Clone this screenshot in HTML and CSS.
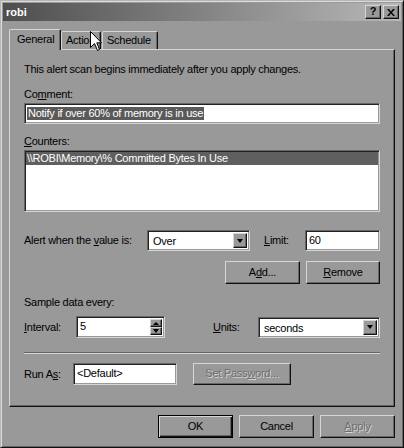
FILE: index.html
```html
<!DOCTYPE html>
<html>
<head>
<meta charset="utf-8">
<link rel="stylesheet" href="styles.css">
</head>
<body>
<div class="window">
  <div class="titlebar">
    <span class="title">robi</span>
    <div class="cap-btns">
      <span class="cap-btn q">?</span>
      <span class="cap-btn"><svg width="8" height="7" viewBox="0 0 8 7"><path d="M0 0h2l2 2.5L6 0h2L5 3.5 8 7H6L4 4.5 2 7H0l3-3.5z" fill="#000"/></svg></span>
    </div>
  </div>
  <div class="tabs">
    <div class="tab active">General</div>
    <div class="tab t-action">Action</div>
    <div class="tab t-sched">Schedule</div>
  </div>
  <div class="panel">
    <div class="txt intro">This alert scan begins immediately after you apply changes.</div>
    <div class="txt lbl lbl-comment">Co<u>m</u>ment:</div>
    <div class="edit comment"><span class="sel">Notify if over 60% of memory is in use</span></div>
    <div class="txt lbl lbl-counters"><u>C</u>ounters:</div>
    <div class="edit list"><div class="row-sel">\\ROBI\Memory\% Committed Bytes In Use</div></div>
    <div class="row alert-row">
      <span class="txt w-alert">Alert when the <u>v</u>alue is:</span>
      <div class="edit combo w-over"><span class="cv">Over</span><span class="dd"><i class="tri-down"></i></span></div>
      <span class="txt w-limit"><u>L</u>imit:</span>
      <div class="edit field grow">60</div>
    </div>
    <div class="row btn-row">
      <div class="btn b-add">A<u>d</u>d...</div>
      <div class="btn b-remove"><u>R</u>emove</div>
    </div>
    <div class="txt lbl lbl-sample">Sample data every:</div>
    <div class="row interval-row">
      <span class="txt w-interval"><u>I</u>nterval:</span>
      <div class="edit field spin"><span class="sv">5</span><span class="spin-btns"><span class="sb"><i class="tri-up"></i></span><span class="sb"><i class="tri-down"></i></span></span></div>
      <span class="txt w-units"><u>U</u>nits:</span>
      <div class="edit combo grow"><span class="cv">seconds</span><span class="dd"><i class="tri-down"></i></span></div>
    </div>
    <div class="sep"></div>
    <div class="row runas-row">
      <span class="txt w-runas">Run A<u>s</u>:</span>
      <div class="edit field w-default">&lt;Default&gt;</div>
      <div class="btn disabled b-setpw">Set Pass<u>w</u>ord...</div>
    </div>
  </div>
  <div class="footer">
    <div class="btn default">OK</div>
    <div class="btn">Cancel</div>
    <div class="btn disabled"><u>A</u>pply</div>
  </div>
  <svg class="cursor" width="13" height="21" viewBox="0 0 13 21"><path d="M0.5 0.5V16.5L4.5 12.5L7.5 19.5L9.5 18.5L6.8 11.8H11.5Z" fill="#fff" stroke="#000" stroke-width="1"/></svg>
</div>
</body>
</html>
```
FILE: styles.css
```css
* { box-sizing: border-box; }
body {
  margin: 0;
  background: #999;
  font-family: "Liberation Sans", Arial, sans-serif;
  font-size: 11px;
  letter-spacing: -0.25px;
  line-height: 13px;
  color: #000;
}
u { text-decoration: underline; text-underline-offset: 1px; }
.window {
  position: relative;
  width: 404px;
  height: 448px;
  background: #999;
  border: 1px solid;
  border-color: #b5b5b5 #111 #111 #b5b5b5;
  box-shadow: inset 1px 1px 0 #dcdcdc, inset -1px -1px 0 #666;
  padding: 2px;
  display: flex;
  flex-direction: column;
}
.titlebar {
  height: 18px;
  background: linear-gradient(to right, #4e4e4e, #b8b8b8);
  display: flex;
  align-items: center;
  padding: 0 2px 0 3px;
}
.title {
  flex: 1;
  color: #fff;
  font-weight: bold;
  letter-spacing: 0;
  font-size: 11px;
}
.cap-btns { display: flex; gap: 2px; }
.cap-btn {
  width: 16px;
  height: 14px;
  background: #999;
  border: 1px solid;
  border-color: #d6d6d6 #111 #111 #d6d6d6;
  box-shadow: inset -1px -1px 0 #666;
  display: flex;
  align-items: center;
  justify-content: center;
  font-weight: bold;
  font-size: 11px;
  letter-spacing: 0;
}
.cap-btn.q { padding-bottom: 1px; }
.tabs {
  margin-top: 8px;
  height: 20px;
  display: flex;
  align-items: flex-end;
  padding-left: 6px;
  position: relative;
  z-index: 2;
}
.tab {
  height: 18px;
  background: #999;
  border-top: 1px solid #d6d6d6;
  border-left: 1px solid #d6d6d6;
  border-right: 1px solid #111;
  border-radius: 2px 2px 0 0;
  box-shadow: inset -1px 0 0 #666;
  padding: 2px 0 0 4px;
}
.tab.active {
  width: 52px;
  height: 21px;
  margin-bottom: -1px;
  padding: 3px 0 0 7px;
}
.t-action { width: 40px; }
.t-sched { width: 56px; margin-left: 1px; }
.panel {
  margin-left: 6px;
  width: 386px;
  height: 358px;
  border: 1px solid;
  border-color: #d6d6d6 #111 #111 #d6d6d6;
  box-shadow: inset -1px -1px 0 #666;
  padding: 13px 14px 0 14px;
  display: flex;
  flex-direction: column;
}
.txt { white-space: nowrap; }
.lbl-comment { margin-top: 12px; }
.edit {
  background: #fff;
  border: 1px solid;
  border-color: #666 #d6d6d6 #d6d6d6 #666;
  box-shadow: inset 1px 1px 0 #222, inset -1px -1px 0 #999;
}
.comment {
  margin-top: 2px;
  height: 21px;
  padding: 3px 2px;
}
.sel { background: #5a5a5a; color: #fff; display: inline-block; padding: 0 1px; }
.lbl-counters { margin-top: 11px; }
.list {
  margin-top: 2px;
  height: 62px;
  padding: 1px;
}
.row-sel {
  background: #5f5f5f;
  color: #fff;
  height: 13px;
  padding-left: 1px;
}
.row { display: flex; align-items: center; }
.alert-row { margin-top: 18px; height: 21px; }
.w-alert { width: 123px; }
.combo {
  height: 21px;
  display: flex;
  align-items: stretch;
  padding: 2px;
}
.cv { flex: 1; padding: 2px 0 0 3px; }
.w-over { width: 103px; }
.dd {
  width: 14px;
  background: #999;
  border: 1px solid;
  border-color: #d6d6d6 #111 #111 #d6d6d6;
  box-shadow: inset -1px -1px 0 #666;
  display: flex;
  align-items: center;
  justify-content: center;
}
.tri-down {
  width: 0; height: 0;
  border-left: 3.5px solid transparent;
  border-right: 3.5px solid transparent;
  border-top: 4px solid #000;
}
.tri-up {
  width: 0; height: 0;
  border-left: 3px solid transparent;
  border-right: 3px solid transparent;
  border-bottom: 3px solid #000;
}
.w-limit { width: 41px; margin-left: 14px; }
.grow { flex: 1; }
.field { height: 21px; padding: 3px 3px; }
.btn-row { margin-top: 10px; justify-content: flex-end; gap: 6px; }
.btn {
  width: 75px;
  height: 23px;
  background: #999;
  border: 1px solid;
  border-color: #d6d6d6 #111 #111 #d6d6d6;
  box-shadow: inset -1px -1px 0 #666;
  display: flex;
  align-items: center;
  justify-content: center;
  padding-bottom: 1px;
}
.b-remove { width: 74px; }
.btn.default {
  border: 1px solid #000;
  box-shadow: inset 1px 1px 0 #d6d6d6, inset -1px -1px 0 #111, inset -2px -2px 0 #666;
}
.btn.disabled {
  color: #6e6e6e;
  text-shadow: 1px 1px 0 #d6d6d6;
}
.lbl-sample { margin-top: 12px; }
.interval-row { margin-top: 7px; height: 22px; }
.w-interval { width: 52px; }
.spin {
  width: 89px;
  height: 22px;
  display: flex;
  padding: 2px 2px 2px 3px;
}
.sv { flex: 1; padding-top: 1px; }
.spin-btns { display: flex; flex-direction: column; gap: 0; width: 12px; }
.sb {
  flex: 1;
  background: #999;
  border: 1px solid;
  border-color: #d6d6d6 #111 #111 #d6d6d6;
  box-shadow: inset -1px -1px 0 #666;
  display: flex;
  align-items: center;
  justify-content: center;
}
.w-units { width: 45px; margin-left: 48px; }
.interval-row .combo { height: 21px; }
.sep {
  margin-top: 14px;
  height: 2px;
  border-top: 1px solid #666;
  border-bottom: 1px solid #d6d6d6;
}
.runas-row { margin-top: 9px; height: 22px; }
.w-runas { width: 49px; }
.w-default { width: 104px; height: 22px; }
.b-setpw { width: 98px; height: 22px; margin-left: 16px; }
.footer {
  margin-top: 8px;
  display: flex;
  justify-content: flex-end;
  gap: 6px;
  padding-right: 6px;
}
.cursor {
  position: absolute;
  left: 89px;
  top: 30px;
  z-index: 5;
}
```
